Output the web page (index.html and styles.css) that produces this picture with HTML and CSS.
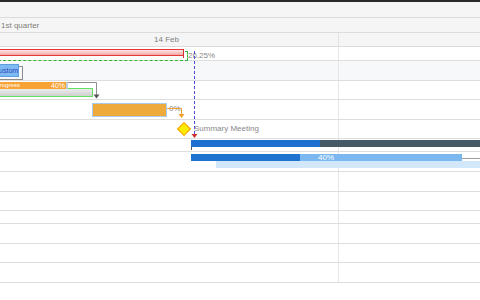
FILE: index.html
```html
<!DOCTYPE html>
<html lang="en">
<head>
    <meta charset="UTF-8">
    <title>Gantt</title>
    <link rel="stylesheet" href="styles.css">
</head>
<body>
    <div class="topbar"></div>

    <!-- time scale -->
    <div class="scale">
        <div class="scale-row scale-top"></div>
        <div class="scale-row scale-quarter"><span class="scale-label">1st quarter</span></div>
        <div class="scale-row scale-days">
            <div class="day">14 Feb</div>
            <div class="day"></div>
        </div>
    </div>

    <!-- task rows -->
    <div class="chart">
        <div class="row row-summary">
            <div class="cell"></div><div class="cell"></div>
            <div class="baseline baseline-summary" style="left:-2px;width:190px"></div>
            <div class="bar bar-summary" style="left:-2px;width:186px"></div>
            <span class="bar-label" style="left:188px">26.25%</span>
        </div>
        <div class="row row-tall row-selected">
            <div class="cell"></div><div class="cell"></div>
            <div class="baseline baseline-custom" style="left:-2px;width:25px"></div>
            <div class="bar bar-custom" style="left:-9px;width:28px">Custom</div>
        </div>
        <div class="row">
            <div class="cell"></div><div class="cell"></div>
            <div class="baseline baseline-progress" style="left:-2px;width:95px"></div>
            <div class="bar bar-progress" style="left:-6px;width:74px">
                <span class="bar-name">Progress</span>
                <span class="bar-pct">40%</span>
            </div>
        </div>
        <div class="row row-tall">
            <div class="cell"></div><div class="cell"></div>
            <div class="bar bar-task" style="left:92px;width:75px"></div>
            <span class="bar-label" style="left:169px">0%</span>
        </div>
        <div class="row">
            <div class="cell"></div><div class="cell"></div>
            <div class="milestone" style="left:179px"></div>
            <span class="bar-label" style="left:194px">Summary Meeting</span>
        </div>
        <div class="row row-short">
            <div class="cell"></div><div class="cell"></div>
            <div class="bar bar-dark" style="left:191px;width:289px">
                <div class="bar-done" style="width:129px"></div>
            </div>
        </div>
        <div class="row row-tall">
            <div class="cell"></div><div class="cell"></div>
            <div class="bar bar-light" style="left:191px;width:271px">
                <div class="bar-done" style="width:109px"></div>
                <span class="bar-pct">40%</span>
            </div>
            <div class="bar-tail" style="left:462px;width:18px"></div>
            <div class="baseline baseline-light" style="left:216px;width:264px"></div>
        </div>
        <div class="row row-tall"><div class="cell"></div><div class="cell"></div></div>
        <div class="row"><div class="cell"></div><div class="cell"></div></div>
        <div class="row row-short"><div class="cell"></div><div class="cell"></div></div>
        <div class="row row-tall"><div class="cell"></div><div class="cell"></div></div>
        <div class="row"><div class="cell"></div><div class="cell"></div></div>
        <div class="row row-tall"><div class="cell"></div><div class="cell"></div></div>

        <!-- dependency links -->
        <svg class="links" width="480" height="236" viewBox="0 0 480 236">
            <path d="M68 35.5 H96.5 V48" fill="none" stroke="#8f8f8f" stroke-width="1"/>
            <polygon points="93.5,47.5 99.5,47.5 96.5,51.5" fill="#555"/>
            <path d="M167 61.5 H181.5 V67" fill="none" stroke="#f0a030" stroke-width="1"/>
            <polygon points="178.5,67 184.5,67 181.5,71" fill="#f0a030"/>
            <path d="M194.5 4 V87" fill="none" stroke="#4b4bd6" stroke-width="1" stroke-dasharray="3 2"/>
            <polygon points="191.5,87 197.5,87 194.5,91" fill="#d32f2f"/>
        </svg>
    </div>
</body>
</html>
```

FILE: styles.css
```css
* {
    margin: 0;
    padding: 0;
    box-sizing: border-box;
}

body {
    width: 480px;
    height: 300px;
    overflow: hidden;
    background: #fff;
    color: #808080;
    font-family: 'Liberation Sans', Arial, sans-serif;
    font-size: 8px;
}

.topbar {
    height: 2px;
    background: #2a2a2a;
}

/* scale */
.scale-row {
    display: flex;
    align-items: center;
    background: #f5f5f5;
    border-bottom: 1px solid #dcdcdc;
}

.scale-top {
    height: 16px;
}

.scale-quarter {
    height: 15px;
}

.scale-label {
    padding-left: 1px;
}

.scale-days {
    height: 14px;
    display: grid;
    grid-template-columns: 339px 1fr;
    align-items: stretch;
}

.day {
    display: flex;
    align-items: center;
    justify-content: center;
    padding-right: 5px;
    border-right: 1px solid #e2e2e2;
}

.day:last-child {
    border-right: none;
}

/* rows */
.chart {
    position: relative;
}

.row {
    position: relative;
    height: 19px;
    display: grid;
    grid-template-columns: 339px 1fr;
    border-bottom: 1px solid #dedede;
}

.row-summary {
    height: 14px;
}

.row-tall {
    height: 20px;
}

.row-short {
    height: 13px;
}

.row-selected {
    background: #f7f8fa;
}

.cell:first-child {
    border-right: 1px solid #e6e6e6;
}

/* bars */
.bar,
.baseline,
.bar-label,
.bar-tail,
.milestone {
    position: absolute;
}

.bar-label {
    top: 3px;
    line-height: 11px;
    white-space: nowrap;
    color: #888;
}

.baseline-summary {
    top: 4px;
    height: 10px;
    border: 1px dashed #2fb52f;
}

.bar-summary {
    top: 2px;
    height: 7px;
    border: 1px solid #e53935;
    background: linear-gradient(#ffe3e3, #f4a9a9);
}

.bar-summary::after {
    content: '';
    position: absolute;
    right: -1px;
    top: -1px;
    width: 1px;
    height: 9px;
    background: #d32f2f;
}

.baseline-custom {
    top: 5px;
    height: 14px;
    border: 1px solid #8c8c8c;
}

.bar-custom {
    top: 3px;
    height: 13px;
    padding-left: 2px;
    background: #7db9f2;
    border: 1px solid #5f9fe0;
    color: #3345b5;
    font-size: 7px;
    line-height: 11px;
    white-space: nowrap;
    overflow: hidden;
}

.baseline-progress {
    top: 7px;
    height: 9px;
    border: 1px solid #62e062;
    background: linear-gradient(#ececec, #cfcfcf);
}

.bar-progress {
    top: 1px;
    height: 7px;
    display: flex;
    justify-content: space-between;
    align-items: center;
    padding: 0 1px 0 2px;
    background: #f7a234;
    border-right: 2px solid #b9cfe0;
    color: #fff;
    line-height: 7px;
    white-space: nowrap;
}

.bar-progress .bar-name {
    font-size: 6px;
}

.bar-progress .bar-pct {
    font-size: 7px;
}

.bar-task {
    top: 3px;
    height: 14px;
    background: #eeaa3a;
    border: 1px solid #a6cbef;
}

.milestone {
    top: 4px;
    width: 10px;
    height: 10px;
    background: #ffeb00;
    border: 1px solid #f39c12;
    transform: rotate(45deg);
}

.bar-dark {
    top: 1px;
    height: 7px;
    background: #455a64;
}

.bar-dark::before {
    content: '';
    position: absolute;
    left: 0;
    top: 7px;
    width: 1px;
    height: 3px;
    background: #555;
}

.bar-done {
    height: 100%;
    flex-shrink: 0;
    background: #1d6fd0;
}

.bar-light {
    top: 2px;
    height: 7px;
    display: flex;
    align-items: center;
    background: #7ab8ef;
    color: #fff;
    line-height: 7px;
}

.bar-light .bar-done {
    background: #1f73cf;
}

.bar-light .bar-pct {
    padding-left: 18px;
    font-size: 8px;
}

.bar-tail {
    top: 6px;
    height: 1px;
    background: #a0a0a0;
}

.baseline-light {
    top: 9px;
    height: 7px;
    background: #d3e7fa;
}

.links {
    position: absolute;
    top: 0;
    left: 0;
    pointer-events: none;
}
```
